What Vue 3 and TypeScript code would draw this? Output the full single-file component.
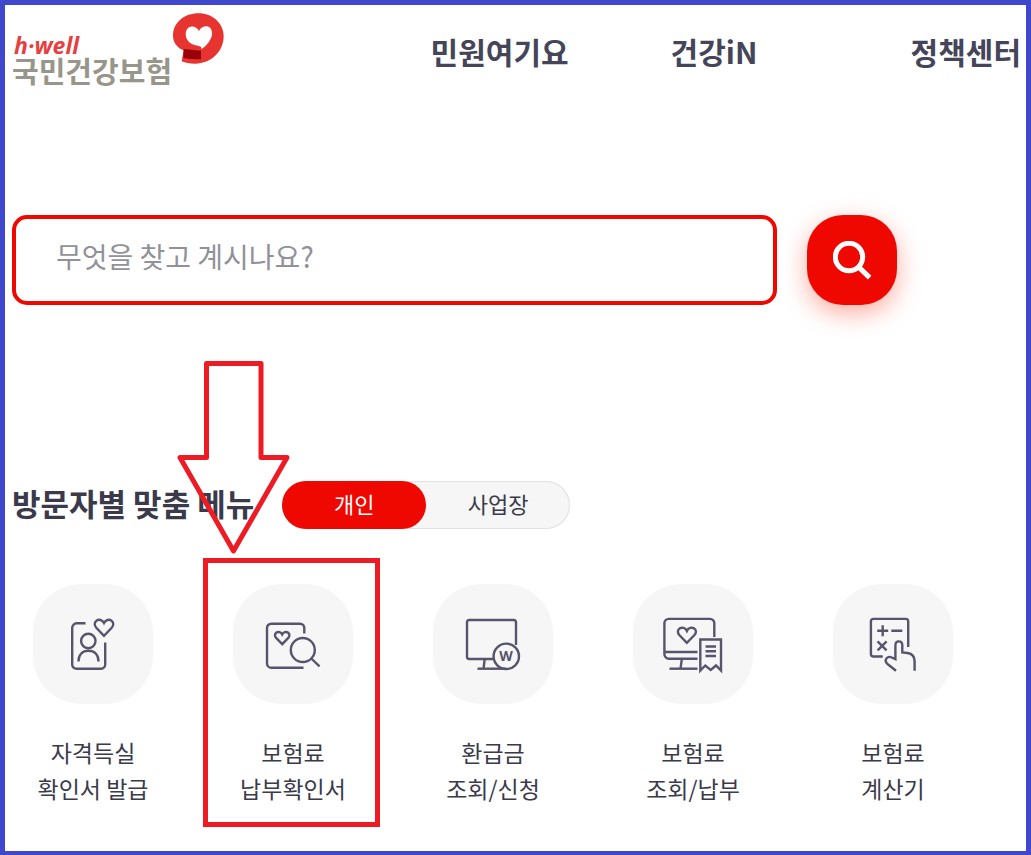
<script setup lang="ts">
import { ref } from 'vue'

interface MenuItem {
  lines: string[]
  paths: string[]
  mark?: string
  highlighted?: boolean
}

const navigation: string[] = ['민원여기요', '건강iN', '정책센터']
const tabs: string[] = ['개인', '사업장']
const activeTab = ref(0)
const keyword = ref('')

const menu: MenuItem[] = [
  {
    lines: ['자격득실', '확인서 발급'],
    paths: [
      'M22.5 9.3H14A4.5 4.5 0 0 0 9.2 13.8V50.5A4.2 4.2 0 0 0 13.7 54.7H38A4.2 4.2 0 0 0 42.2 50.5V28.5',
      'M32.5 27A7.2 7.2 0 1 1 18.1 27A7.2 7.2 0 1 1 32.5 27Z',
      'M15.5 47.5C15.5 40.5 19.5 36.7 25.5 36.7S35.5 40.5 35.5 47.5',
      'M41 21.8L33.3 13.8C31.2 11.5 31.3 8.6 33.3 6.9C35.8 4.9 39.2 5.8 41 9C42.8 5.8 46.2 4.9 48.7 6.9C50.7 8.6 50.8 11.5 48.7 13.8Z',
    ],
  },
  {
    lines: ['보험료', '납부확인서'],
    highlighted: true,
    paths: [
      'M41.3 19.5V14A4.3 4.3 0 0 0 37 9.7H8.3A4.3 4.3 0 0 0 4 14V49.4A4.3 4.3 0 0 0 8.3 53.7H40.5',
      'M51.8 36A12 12 0 1 1 27.8 36A12 12 0 1 1 51.8 36Z',
      'M48.3 44.5L56.5 52.3',
      'M19.2 30.2L13.1 23.9C11.5 22.2 11.7 20 13.2 18.8C15.2 17.3 17.9 18 19.2 20.5C20.5 18 23.2 17.3 25.2 18.8C26.7 20 26.9 22.2 25.3 23.9Z',
    ],
  },
  {
    lines: ['환급금', '조회/신청'],
    mark: 'W',
    paths: [
      'M30.5 45H6.2A2.2 2.2 0 0 1 4 42.8V8.2A2.2 2.2 0 0 1 6.2 6H50.8A2.2 2.2 0 0 1 53 8.2V31',
      'M21.7 45L20.5 54.7',
      'M14.5 54.7H43',
      'M56 42.3A12.7 12.7 0 1 1 30.6 42.3A12.7 12.7 0 1 1 56 42.3Z',
    ],
  },
  {
    lines: ['보험료', '조회/납부'],
    paths: [
      'M34.5 44.7H6A4.5 4.5 0 0 1 1.4 40.2V9A4.3 4.3 0 0 1 5.7 4.9H47A4.3 4.3 0 0 1 51.3 9.2V23',
      'M1.4 38H34.5',
      'M18.9 44.7L17.5 54.7',
      'M6.5 54.7H34.5',
      'M23.9 28.8L16.3 21C14.3 18.8 14.5 16 16.5 14.6C19 12.9 22.4 13.8 23.9 17C25.4 13.8 28.8 12.9 31.3 14.6C33.3 16 33.5 18.8 31.5 21Z',
      'M37.3 56.5V25.5H58V56.5L53 51.5L47.7 56L42.3 51.5Z',
      'M42.5 32.5H53M42.5 37.3H53M42.5 42H53',
    ],
  },
  {
    lines: ['보험료', '계산기'],
    paths: [
      'M19.8 42.5H10.2A2.5 2.5 0 0 1 7.9 40V7.3A2.5 2.5 0 0 1 10.4 4.9H42.8A2.5 2.5 0 0 1 45.2 7.4V33',
      'M19.7 11.2V22.2M14.2 16.7H25.2M28.3 16.7H39.3',
      'M14.6 27.3L23.6 36.3M23.6 27.3L14.6 36.3',
      'M33 56.8L24.8 50.3C22.5 48.3 22.2 46 23.6 44.3C25 42.6 27.2 42.7 28.8 43.5L32.4 45.2V31.3C32.4 26 39.3 26 39.3 31.3V38.4L44.5 39C49 39.7 51.6 42.7 51.6 47V56.8',
    ],
  },
]
</script>

<template>
  <div class="page">
    <header class="header">
      <a class="logo" href="#" aria-label="h·well 국민건강보험">
        <span class="wordmark">
          <span class="brand">h·well</span>
          <span class="company">국민건강보험</span>
        </span>
        <svg class="emblem" viewBox="0 0 153 153" aria-hidden="true">
          <path fill="#e73431" d="M0 68C0 28 35 1 76 1C120 1 152 32 152 70C152 115 115 152 66 152C50 152 36 149 26 145L32 112C12 104 0 88 0 68Z" />
          <path fill="#98000a" d="M32 108L84 113V139C66 139 48 138 31 135Z" />
          <path fill="#fff" d="M78 54C71 40 56 37 46 44C35 53 37 72 44 82C52 95 66 96 84 101L85 108C98 101 117 80 117 62C117 46 108 39 98 40C88 41 82 46 78 54Z" />
        </svg>
      </a>
      <nav class="nav">
        <a v-for="name in navigation" :key="name" href="#">{{ name }}</a>
      </nav>
    </header>

    <form class="search" role="search" @submit.prevent>
      <input v-model="keyword" type="text" aria-label="검색어" placeholder="무엇을 찾고 계시나요?" />
      <button type="submit" aria-label="검색">
        <svg viewBox="0 0 117 117" aria-hidden="true">
          <circle cx="48" cy="48" r="41" />
          <path d="M78 79L110 110" />
        </svg>
      </button>
    </form>

    <section>
      <div class="menu-head">
        <h2>방문자별 맞춤 메뉴</h2>
        <div class="tabs">
          <button
            v-for="(tab, index) in tabs"
            :key="tab"
            type="button"
            :class="{ active: index === activeTab }"
            :aria-pressed="index === activeTab"
            @click="activeTab = index"
          >{{ tab }}</button>
        </div>
      </div>

      <ul class="menu">
        <li v-for="item in menu" :key="item.lines.join(' ')">
          <a href="#">
            <span class="tile">
              <svg viewBox="0 0 60 60" aria-hidden="true">
                <path v-for="d in item.paths" :key="d" :d="d" />
                <text v-if="item.mark" x="43" y="47" text-anchor="middle">{{ item.mark }}</text>
              </svg>
            </span>
            <span v-for="line in item.lines" :key="line" class="line">{{ line }}</span>
          </a>
          <template v-if="item.highlighted">
            <span class="frame"></span>
            <svg class="arrow" viewBox="0 0 114 194" aria-hidden="true">
              <path d="M29.5 2.5H84V96.5H110L56.5 190L3 96.5H29.5Z" />
            </svg>
          </template>
        </li>
      </ul>
    </section>
  </div>
</template>

<style>
body {
  margin: 0;
  background: #fff;
}
</style>

<style scoped>
.page {
  box-sizing: border-box;
  min-height: 100vh;
  padding: 8px 5px 24px 7px;
  border: 5px solid #3f48cc;
  border-bottom-width: 4px;
  overflow: hidden;
  color: #3b3a4b;
  font-family: "Noto Sans CJK KR", "Noto Sans", sans-serif;
}
a {
  color: inherit;
  text-decoration: none;
}
button,
input {
  box-sizing: border-box;
  margin: 0;
  font-family: inherit;
}
.header {
  display: flex;
  align-items: flex-start;
  justify-content: space-between;
  height: 74px;
}
.logo {
  display: flex;
  align-items: flex-start;
  gap: 1px;
}
.wordmark {
  display: flex;
  flex-direction: column;
  padding-top: 20px;
}
.brand {
  padding-left: 2px;
  color: #e73f3f;
  font: italic 700 23px/24px "Open Sans", sans-serif;
}
.company {
  color: #98968a;
  font-size: 29px;
  font-weight: 700;
  line-height: 26px;
}
.emblem {
  width: 51px;
  height: 51px;
}
.nav {
  display: grid;
  grid-template-columns: 240px 240px auto;
  padding-top: 16px;
  color: #45455a;
  font-size: 30px;
  font-weight: 700;
  line-height: 44px;
}
.search {
  display: flex;
  gap: 30px;
  max-width: 885px;
  margin-top: 128px;
}
.search input {
  flex: 1;
  min-width: 0;
  height: 90px;
  padding: 0 40px 8px;
  border: 4px solid #ef0800;
  border-radius: 15px;
  outline: none;
  background: #fff;
  color: #3b3a4b;
  font-size: 28px;
}
.search input::placeholder {
  color: #919199;
  opacity: 1;
}
.search button {
  display: grid;
  place-items: center;
  width: 90px;
  height: 90px;
  padding: 0;
  border: 0;
  border-radius: 36px;
  background: #ef0800;
  box-shadow: 0 8px 24px rgba(255, 50, 20, 0.4);
}
.search svg {
  width: 39px;
  height: 39px;
  fill: none;
  stroke: #fff;
  stroke-width: 15;
}
.menu-head {
  display: flex;
  align-items: flex-start;
  gap: 28px;
  margin-top: 176px;
}
h2 {
  margin: 0;
  font-size: 31px;
  font-weight: 700;
  line-height: 44px;
}
.tabs {
  display: flex;
  border-radius: 24px;
  background: #f6f6f6;
  box-shadow: inset 0 0 0 1px #e1e1e5;
}
.tabs button {
  width: 144px;
  height: 48px;
  padding: 0 0 4px;
  border: 0;
  border-radius: 24px;
  background: transparent;
  color: #3b3a4b;
  font-size: 22px;
}
.tabs .active {
  background: #ef0800;
  color: #fff;
}
.menu {
  display: grid;
  grid-template-columns: repeat(5, minmax(0, 160px));
  gap: 40px;
  margin: 55px 0 0;
  padding: 0 1px;
  list-style: none;
}
.menu li {
  position: relative;
}
.menu a {
  display: flex;
  flex-direction: column;
  align-items: center;
}
.tile {
  display: grid;
  place-items: center;
  width: 120px;
  height: 120px;
  margin-bottom: 30px;
  border-radius: 48px;
  background: #f6f6f6;
}
.tile svg {
  width: 60px;
  height: 60px;
  fill: none;
  stroke: #56556b;
  stroke-width: 2.4;
}
.tile text {
  fill: #56556b;
  stroke: none;
  font: 700 14px "Open Sans", sans-serif;
}
.line {
  font-size: 23px;
  line-height: 36px;
  white-space: nowrap;
}
.frame {
  position: absolute;
  inset: -26px -7px -21px -10px;
  border: 5px solid #ed1c24;
  pointer-events: none;
}
.arrow {
  position: absolute;
  top: -223px;
  left: -36px;
  width: 114px;
  height: 194px;
  fill: none;
  stroke: #ed1c24;
  stroke-width: 5;
  stroke-linejoin: round;
  pointer-events: none;
}
</style>
